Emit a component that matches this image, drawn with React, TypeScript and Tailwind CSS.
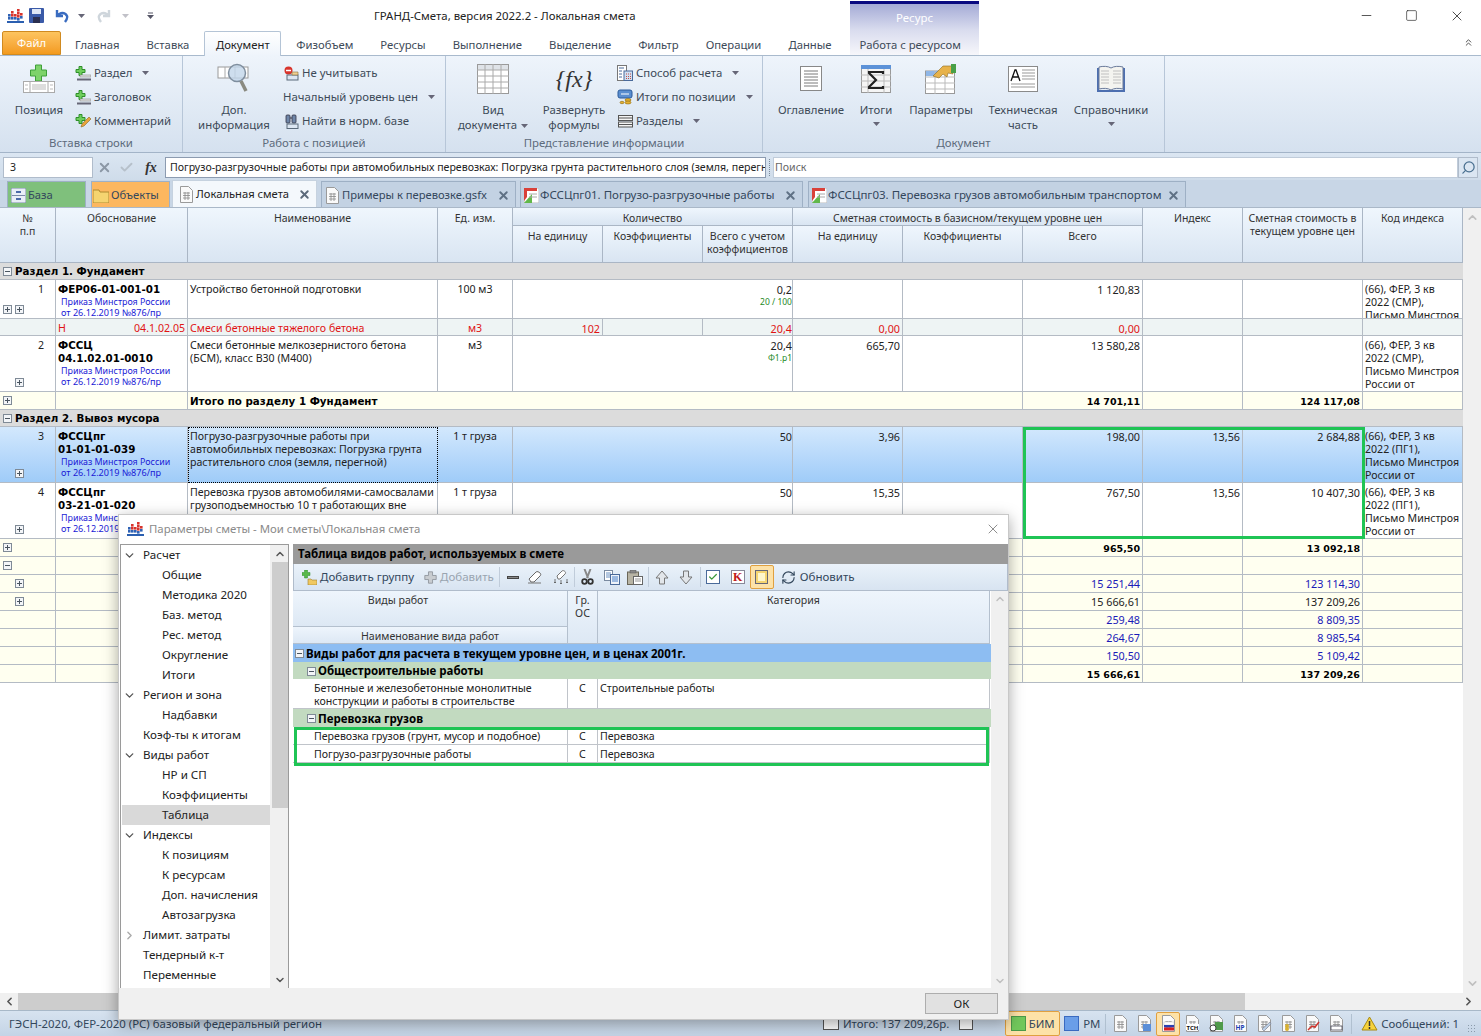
import React from "react";
import { Check, ChevronDown, ChevronLeft, ChevronRight, ChevronUp, ChevronsUp, Minus, RefreshCw, Search, Square, X } from "lucide-react";

const Logo = () => (
  <svg width="17" height="15" viewBox="0 0 17 15" className="shrink-0">
    <rect x="0" y="13" width="17" height="2" fill="#2b5fb0" />
    {[[1,6,"#2f62b5"],[1,9,"#2f62b5"],[4,3,"#d8342c"],[4,6,"#d8342c"],[4,9,"#2f62b5"],[7,6,"#d8342c"],[7,9,"#2f62b5"],[10,1,"#d8342c"],[10,4,"#d8342c"],[10,7,"#d8342c"],[10,10,"#2f62b5"],[13,5,"#d8342c"],[13,8,"#2f62b5"]].map(([x,y,c],i)=>(
      <rect key={i} x={x as number} y={y as number} width="2.6" height="2.6" fill={c as string} />
    ))}
  </svg>
);
const Caret = ({ className = "" }: { className?: string }) => (
  <svg width="7" height="4" viewBox="0 0 7 4" className={className}><path d="M0 0h7L3.500 4z" fill="#667" /></svg>
);
const Plus = ({ s = 16, gray }: { s?: number; gray?: boolean }) => (
  <svg width={s} height={s} viewBox="0 0 16 16" className="shrink-0"><path d="M5.500 1h5v4.500H15v5h-4.500V15h-5v-4.500H1v-5h4.500z" fill={gray ? "#c8ccd0" : "#7ed36a"} stroke={gray ? "#8a9098" : "#2f8f2a"} /></svg>
);
const PlusLine = ({ pen = false }: { pen?: boolean }) => (
  <svg width="16" height="15" viewBox="0 0 16 15">
    <path d="M4 0.500h3v3h3v3H7v3H4v-3H1v-3h3z" fill="#6fce5c" stroke="#2f8f2a" />
    {pen ? <path d="M6 13l1-3 7-7 2 2-7 7z" fill="#e8a33c" stroke="#8a6a20" strokeWidth=".6" /> : <><rect x="5" y="9" width="11" height="2" fill="#e4e4e4" stroke="#777" strokeWidth=".5" /><rect x="2" y="12.500" width="14" height="2" fill="#667" /></>}
  </svg>
);
const BigTable = () => (
  <svg width="32" height="30" viewBox="0 0 32 30">
    <rect x=".5" y=".5" width="31" height="29" fill="#fff" stroke="#9a9a9a" />
    <rect x="1" y="1" width="30" height="5" fill="#dfe3e8" />
    <path d="M0 6h32M0 12h32M0 18h32M0 24h32M8 0v30M16 0v30M24 0v30" stroke="#aaa" fill="none" />
  </svg>
);
const DocSmall = ({ children }: { children?: React.ReactNode }) => (
  <svg width="15" height="17" viewBox="0 0 15 17" className="shrink-0">
    <path d="M1.500.5h8l4 4v12h-12z" fill="#fafafa" stroke="#9a9a9a" />
    <path d="M4 7h7M4 9.500h7M4 12h7M6 6v8M9 6v8" stroke="#888" strokeWidth=".8" fill="none" />
    {children}
  </svg>
);

const RibSmall = ({ icon, label, caret }: { icon?: React.ReactNode; label: string; caret?: boolean }) => (
  <div className="flex h-6 items-center gap-[3px] whitespace-nowrap pt-[2px]">
    {icon && <span className="flex w-4 shrink-0 justify-center">{icon}</span>}
    <span>{label}</span>
    {caret && <Caret className="ml-[7px]" />}
  </div>
);
const RibBig = ({ icon, lines, caret, w, ml }: { icon: React.ReactNode; lines: string[]; caret?: boolean; w: string; ml?: string }) => (
  <div className={`flex shrink-0 flex-col items-center leading-[15px] ${w} ${ml ?? ""}`}>
    <div className="flex h-[37px] items-center justify-center">{icon}</div>
    <div className="h-[5px]" />
    {lines.map((l, i) => <div key={i} className="whitespace-nowrap">{l}{caret && lines.length > 1 && i === 1 ? <Caret className="ml-1 inline" /> : null}</div>)}
    {caret && lines.length === 1 && <Caret className="mt-[5px]" />}
  </div>
);
const Group = ({ w, label, children }: { w: string; label: string; children: React.ReactNode }) => (
  <div className={`flex h-full shrink-0 flex-col border-r border-[#b7c6d8] ${w}`}>
    <div className="flex h-[78px] pt-[4px]">{children}</div>
    <div className="text-center leading-[17px] text-[#5d6b7c]">{label}</div>
  </div>
);
const Box = ({ minus }: { minus?: boolean }) => (
  <span className="relative inline-block h-[9px] w-[9px] shrink-0 border border-[#7f8a96] bg-[#f3f5f8]">
    <span className="absolute left-[1px] top-[3px] h-px w-[5px] bg-[#4a5560]" />
    {!minus && <span className="absolute left-[3px] top-[1px] h-[5px] w-px bg-[#4a5560]" />}
  </span>
);

const bold = "font-['DejaVu_Sans',sans-serif] text-[10.300px] font-bold text-black";
const boldNum = "font-['DejaVu_Sans',sans-serif] text-[9.500px] font-bold text-black pt-[3px]";
const cols = "grid grid-cols-[56px_132px_250px_75px_90px_100px_90px_110px_120px_120px_100px_120px_100px] w-[1463px]";
const line = "border-r border-b border-[#b4bbc4] overflow-hidden px-[2px] leading-[13px]";
const cell = `${line} pt-[3px]`;
const numc = `${cell} text-right text-[10.800px]`;

const HCell = ({ children, className = "" }: { children?: React.ReactNode; className?: string }) => (
  <div className={`border-r border-b border-[#aab6c5] bg-gradient-to-b from-[#eff6fd] to-[#d9e5f2] pt-[4px] text-center text-[10.500px] leading-[13px] text-[#333] ${className}`}>{children}</div>
);
const Code = ({ a, b }: { a: string; b?: string }) => (
  <div className="whitespace-nowrap">
    <div className={bold}>{a}</div>
    {b && <div className={bold}>{b}</div>}
    <div className="pl-[3px] text-[8.900px] leading-[11px] text-[#1a1ad6]">Приказ Минстроя России</div>
    <div className="pl-[3px] text-[9.100px] leading-[11px] text-[#1a1ad6]">от 26.12.2019 №876/пр</div>
  </div>
);
const Num = ({ n, boxes }: { n: string; boxes: number }) => (
  <div className={`${cell} flex flex-col justify-between pb-[4px]`}>
    <div className="pr-[9px] text-right">{n}</div>
    <div className={`flex gap-[3px] pl-[1px] ${boxes === 1 ? "pl-[13px]" : ""}`}>{Array.from({ length: boxes }).map((_, i) => <Box key={i} />)}</div>
  </div>
);
const Sec = ({ t }: { t: string }) => (
  <div className={`flex h-[17px] w-[1463px] items-center gap-[3px] border-b border-[#b4bbc4] bg-[#dcdcdc] pl-[3px] ${bold}`}><Box minus /><span className="pt-px">{t}</span></div>
);
const idx = (a: string) => `(66), ФЕР, 3 кв\n2022 (${a}),\nПисьмо Минстроя\nРоссии от`;

const DataRow = ({ h, bg = "bg-white", n, boxes, code, name, unit, qty, sub, price, tot, index, cur, cod, focus }: any) => (
  <div className={`${cols} ${h} ${bg}`}>
    <Num n={n} boxes={boxes} />
    <div className={cell}>{code}</div>
    <div className={focus ? `${line} whitespace-pre border border-dotted border-black pl-[1px] pt-[2px]` : `${cell} whitespace-pre`}>{name}</div>
    <div className={`${cell} text-center`}>{unit}</div>
    <div className={`${numc} col-span-3 pr-0`}>
      <div>{qty}</div>
      {sub && <div className="text-[8.500px] leading-[11px] text-[#1f8a1f]">{sub}</div>}
    </div>
    <div className={numc}>{price}</div>
    <div className={cell} />
    <div className={numc}>{tot}</div>
    <div className={numc}>{index}</div>
    <div className={numc}>{cur}</div>
    <div className={`${cell} whitespace-pre`}>{cod}</div>
  </div>
);
const TotNum = ({ v, strong }: { v?: string; strong?: boolean }) => (
  <div className={`${line} text-right ${strong ? boldNum : "pt-[2px] text-[10.800px]"}`}>{v}</div>
);
const Total = ({ box, label, a, b, color = "", strong }: any) => (
  <div className={`${cols} h-[18px] bg-[#fffff0] ${color}`}>
    <div className={`${line} flex items-center pl-[3px]`}>{box === 1 && <Box />}{box === 2 && <span className="flex pl-[12px]"><Box /></span>}{box === 3 && <Box minus />}</div>
    <div className={line} />
    <div className={`${cell} col-span-7 ${bold}`}>{label}</div>
    <TotNum v={a} strong={strong} />
    <div className={line} />
    <TotNum v={b} strong={strong} />
    <div className={line} />
  </div>
);
const Tab = ({ icon, label, w, active, bg, close = true, ml = "ml-[4px]", gap = "gap-[3px]", pad = "pl-[3px]", size = "text-[11.200px]" }: any) => (
  <div className={`flex shrink-0 items-center whitespace-nowrap border border-b-0 pt-px ${size} ${gap} ${pad} ${w} ${ml} ${active ? "h-[27px] self-end border-[#c6d2df] bg-[#f4f8fc]" : `h-[26px] self-end border-[#9eb0c5] ${bg ?? "bg-[#c3d2e3]"}`}`}>
    {icon}
    <span className={active ? "text-[#222]" : "text-[#33475c]"}>{label}</span>
    {close && <span className="ml-auto pr-[5px]"><X size={13} strokeWidth={3.5} color={active ? "#5c6a7a" : "#5f7185"} /></span>}
  </div>
);
const FssIcon = () => (
  <svg width="15" height="15" viewBox="0 0 15 15" className="shrink-0"><rect width="15" height="15" fill="#fff" stroke="#bbb" /><path d="M0 15L8 6v9z" fill="#62b84a" /><path d="M0 0h13v3H3v6l-3 4z" fill="#d9413a" /><path d="M5 6h8M5 9h8" stroke="#aaa" /></svg>
);

const treeItems: [string, number, string?][] = [
  ["Расчет", 1, "d"], ["Общие", 2], ["Методика 2020", 2], ["Баз. метод", 2], ["Рес. метод", 2], ["Округление", 2], ["Итоги", 2],
  ["Регион и зона", 1, "d"], ["Надбавки", 2], ["Коэф-ты к итогам", 1], ["Виды работ", 1, "d"], ["НР и СП", 2], ["Коэффициенты", 2], ["Таблица", 2, "s"],
  ["Индексы", 1, "d"], ["К позициям", 2], ["К ресурсам", 2], ["Доп. начисления", 2], ["Автозагрузка", 2], ["Лимит. затраты", 1, "r"], ["Тендерный к-т", 1], ["Переменные", 1],
];
const DHead = ({ children, className = "" }: any) => (
  <div className={`border-r border-b border-[#b4c0ce] bg-gradient-to-b from-[#eef5fc] to-[#dde8f4] pt-[3px] text-center leading-[13px] text-[#333] ${className}`}>{children}</div>
);
const dcols = "grid grid-cols-[275px_30px_392px]";
const dbold = "font-bold text-black text-[11.500px]";
const DRow = ({ h, a, b, c }: any) => (
  <div className={`${dcols} ${h} bg-white`}>
    <div className="whitespace-pre border-r border-b border-[#c0c4ca] pl-[21px] pt-[3px] leading-[13px]">{a}</div>
    <div className="border-r border-b border-[#c0c4ca] pt-[3px] text-center leading-[13px]">{b}</div>
    <div className="border-r border-b border-[#c0c4ca] pl-[2px] pt-[3px] leading-[13px]">{c}</div>
  </div>
);
const StatusDoc = ({ children, active }: any) => (
  <span className={`flex h-[24px] w-[24px] items-center justify-center ${active ? "rounded-[2px] border border-[#e0a040] bg-[#fde2a8]" : ""}`}><DocSmall>{children}</DocSmall></span>
);
const Sep = () => <span className="mx-[5px] h-[20px] border-l border-[#c0ccda]" />;
const BlockArrow = ({ down }: { down?: boolean }) => (
  <svg width="14" height="15" viewBox="0 0 14 15" className={down ? "rotate-180" : ""}><path d="M7 1l6 7H9.500v6h-5V8H1z" fill="#e2e6ea" stroke="#777" /></svg>
);
const RibTab = ({ label, ml = "ml-[27px]" }: { label: string; ml?: string }) => (
  <div className={`flex h-[24px] items-center pt-[4px] ${ml}`}>{label}</div>
);

export default function App() {
  return (
    <div className="relative flex h-[1036px] w-[1481px] flex-col overflow-hidden bg-white font-['Noto_Sans',sans-serif] text-[10.600px] text-[#222]">
      {/* title bar */}
      <div className="flex h-[31px] shrink-0 items-center">
        <span className="ml-[3px] flex w-[25px] justify-center"><Logo /></span>
        <svg width="15" height="15" viewBox="0 0 15 15" className="ml-[1px]"><rect width="15" height="15" rx="1" fill="#3a5aa8" /><rect x="3" y="1" width="9" height="5" fill="#dfe7f5" /><rect x="4" y="9" width="7" height="6" fill="#2a2f50" /></svg>
        <svg width="15" height="14" viewBox="0 0 15 14" className="ml-[10px]"><path d="M3 1v6h6M3.500 7C6 3 11 3 13 7c.8 2-.5 4-2 6" stroke="#3a6cc0" strokeWidth="2.400" fill="none" /></svg>
        <Caret className="ml-[9px]" />
        <svg width="15" height="14" viewBox="0 0 15 14" className="ml-[12px]"><path d="M12 1v6H6M11.500 7C9 3 4 3 2 7c-.8 2 .5 4 2 6" stroke="#cfd6dc" strokeWidth="2.400" fill="none" /></svg>
        <Caret className="ml-[10px] opacity-40" />
        <svg width="7" height="8" viewBox="0 0 7 8" className="ml-[18px]"><path d="M1 1h5" stroke="#556" /><path d="M0 3h7L3.500 7z" fill="#556" /></svg>
        <span className="ml-[220px] text-[11.400px] text-[#222]">ГРАНД-Смета, версия 2022.2 - Локальная смета</span>
        <div className="ml-auto flex items-center gap-[31px] pr-[16px]">
          <Minus size={15} strokeWidth={1.2} />
          <Square size={13} strokeWidth={1.2} />
          <X size={16} strokeWidth={1.2} />
        </div>
      </div>

      {/* context tab */}
      <div className="absolute left-[850px] top-[1px] h-[55px] w-[129px] border-t-[3px] border-[#0a0a80] bg-gradient-to-b from-[#a5abd6] via-[#d9dcee] to-[#f8f8fb]">
        <div className="pt-[5px] text-center text-[11.400px] text-white">Ресурс</div>
      </div>

      {/* ribbon tabs */}
      <div className="relative flex h-[25px] shrink-0 items-end border-b border-[#a9bacd] pl-[2px] text-[11.300px] text-[#3d4a58]">
        <div className="flex h-[24px] w-[59px] items-center justify-center rounded-t-[2px] border border-[#d08a20] bg-gradient-to-b from-[#fdc45e] to-[#f39a1c] pt-[1px] text-white">Файл</div>
        <RibTab label="Главная" ml="ml-[14px]" />
        <RibTab label="Вставка" />
        <div className="relative top-px ml-[15px] flex h-[25px] w-[77px] items-center justify-center rounded-t-[2px] border border-b-0 border-[#b4c4d6] bg-gradient-to-b from-white to-[#eef4fb] pt-[3px] text-[#222]">Документ</div>
        <RibTab label="Физобъем" ml="ml-[15px]" />
        <RibTab label="Ресурсы" />
        <RibTab label="Выполнение" />
        <RibTab label="Выделение" />
        <RibTab label="Фильтр" />
        <RibTab label="Операции" />
        <RibTab label="Данные" />
        <div className="relative ml-[28px] flex h-[24px] items-center pt-[4px]">Работа с ресурсом</div>
        <ChevronsUp size={11} className="absolute right-[7px] top-[6px]" color="#444" />
      </div>

      {/* ribbon */}
      <div className="flex h-[97px] shrink-0 border-b border-[#a3b4c8] bg-gradient-to-b from-[#eef4fb] to-[#d5e1ef] text-[11.400px] text-[#3d4a58]">
        <Group w="w-[183px]" label="Вставка строки">
          <RibBig w="w-[70px]" ml="ml-[4px]" lines={["Позиция"]} icon={<svg width="32" height="29" viewBox="0 0 32 29"><path d="M12.500 1h6v5h5v6h-5v5h-6v-5h-5V6h5z" fill="#7ed36a" stroke="#3f9f3a" /><rect x=".5" y="17.500" width="31" height="11" fill="#fff" stroke="#aaa" /><path d="M7 18v10M25 18v10" stroke="#aaa" /><path d="M2 21h3M2 25h3M9 21h14M9 23h14M9 25h14M27 21h3M27 25h3" stroke="#bbb" /></svg>} />
          <div className="ml-[1px]">
            <RibSmall icon={<PlusLine />} label="Раздел" caret />
            <RibSmall icon={<PlusLine />} label="Заголовок" />
            <RibSmall icon={<PlusLine pen />} label="Комментарий" />
          </div>
        </Group>
        <Group w="w-[263px]" label="Работа с позицией">
          <RibBig w="w-[90px]" ml="ml-[6px]" lines={["Доп.", "информация"]} icon={<svg width="34" height="34" viewBox="0 0 34 34"><rect x="1" y="5" width="30" height="11" fill="#fff" stroke="#999" /><path d="M8 5v11M18 5v11" stroke="#aaa" /><circle cx="20" cy="11" r="8.500" fill="#c2d6ea" fillOpacity=".8" stroke="#7f8e9e" strokeWidth="1.500" /><path d="M24 19l5 10" stroke="#8a8a80" strokeWidth="3.500" /></svg>} />
          <div className="ml-[4px]">
            <RibSmall icon={<svg width="15" height="15" viewBox="0 0 15 15"><circle cx="4.500" cy="4.500" r="4" fill="#d8342c" /><path d="M2 4.500h5" stroke="#fff" strokeWidth="1.500" /><rect x="3" y="9" width="11" height="5" fill="#dce6f2" stroke="#5a6a7a" /><path d="M8 6h6v3H8z" fill="#f0d090" stroke="#8a7040" strokeWidth=".6" /></svg>} label="Не учитывать" />
            <RibSmall label="Начальный уровень цен" caret />
            <RibSmall icon={<svg width="15" height="15" viewBox="0 0 15 15"><rect x="2" y="1" width="4" height="8" rx="1" fill="#6f86a8" stroke="#334" strokeWidth=".8" /><rect x="8" y="1" width="4" height="8" rx="1" fill="#6f86a8" stroke="#334" strokeWidth=".8" /><path d="M6 4h2" stroke="#334" /><rect x="3" y="10" width="11" height="4.500" fill="#dce6f2" stroke="#5a6a7a" /></svg>} label="Найти в норм. базе" />
          </div>
        </Group>
        <Group w="w-[317px]" label="Представление информации">
          <RibBig w="w-[70px]" ml="ml-[12px]" lines={["Вид", "документа"]} caret icon={<BigTable />} />
          <RibBig w="w-[70px]" ml="ml-[11px]" lines={["Развернуть", "формулы"]} icon={<span className="font-['Liberation_Serif',serif] text-[24px] italic leading-none text-[#333]">{"{fx}"}</span>} />
          <div className="ml-[8px]">
            <RibSmall icon={<svg width="16" height="16" viewBox="0 0 16 16"><rect x=".5" y=".5" width="9" height="15" fill="#fff" stroke="#777" /><rect x="7" y="6" width="8.500" height="9.500" fill="#cfdff2" stroke="#4a6a9a" /><path d="M2 3h5M2 6h3M2 9h3M2 12h3" stroke="#4a6a9a" /><path d="M9 9h5M9 11.500h5M9 13.500h5" stroke="#c0504a" strokeDasharray="1 1" /></svg>} label="Способ расчета" caret />
            <RibSmall icon={<svg width="16" height="16" viewBox="0 0 16 16"><rect x="1" y="1" width="14" height="8" rx="2" fill="#5a8ed0" stroke="#2a5a9a" /><path d="M4 5h8" stroke="#fff" /><ellipse cx="11" cy="11" rx="3" ry="1.500" fill="#e6b030" stroke="#8a6a10" strokeWidth=".6" /><ellipse cx="11" cy="13.500" rx="3" ry="1.500" fill="#e6b030" stroke="#8a6a10" strokeWidth=".6" /><ellipse cx="5" cy="13.500" rx="2" ry="1.200" fill="#e6b030" stroke="#8a6a10" strokeWidth=".6" /></svg>} label="Итоги по позиции" caret />
            <RibSmall icon={<svg width="15" height="13" viewBox="0 0 15 13"><rect x=".5" y=".5" width="14" height="5" fill="#f4f4f4" stroke="#555" /><rect x=".5" y="7" width="14" height="5" fill="#f4f4f4" stroke="#555" /><path d="M1 3h13M1 9.500h13" stroke="#555" /></svg>} label="Разделы" caret />
          </div>
        </Group>
        <Group w="w-[402px]" label="Документ">
          <RibBig w="w-[80px]" ml="ml-[8px]" lines={["Оглавление"]} icon={<svg width="22" height="25" viewBox="0 0 22 25"><rect x=".5" y=".5" width="21" height="24" fill="#fff" stroke="#888" /><path d="M4 5h14M4 8h14M4 11h14M4 14h14M4 17h14M4 20h14" stroke="#7a7a7a" /></svg>} />
          <RibBig w="w-[50px]" lines={["Итоги"]} caret icon={<svg width="30" height="28" viewBox="0 0 30 28"><rect x=".5" y=".5" width="29" height="27" fill="#f5f5f5" stroke="#999" /><rect y="0" width="30" height="4" fill="#5c92d8" /><path d="M0 10h30M0 16h30M0 22h30M7 4v24M23 4v24" stroke="#bbb" /><path d="M22 9V7H8v1l7 7-7 7v1h14v-2" fill="none" stroke="#222" strokeWidth="2.200" /></svg>} />
          <RibBig w="w-[80px]" lines={["Параметры"]} icon={<svg width="32" height="30" viewBox="0 0 32 30"><rect x=".5" y="7" width="29" height="22.500" fill="#fff" stroke="#999" /><rect x="1" y="7" width="12" height="5" fill="#8fb6e6" /><path d="M0 13h30M0 19h30M0 25h30M10 7v23M20 7v23" stroke="#bbb" /><path d="M8 12L18 2h9l1 8-5-1-1 4-4-3-4 4z" fill="#e7b24a" stroke="#8a6a20" strokeWidth=".6" /><rect x="26" y="0" width="5" height="9" fill="#48a048" /></svg>} />
          <RibBig w="w-[84px]" lines={["Техническая", "часть"]} icon={<svg width="30" height="26" viewBox="0 0 30 26"><rect x=".5" y=".5" width="29" height="25" fill="#fff" stroke="#8a8a8a" /><path d="M3 15l4-11h1l4 11M5 11h5" fill="none" stroke="#111" strokeWidth="1.300" /><path d="M14 4h13M14 7h13M14 10h13M14 13h13M3 18h24M3 21h24" stroke="#999" /></svg>} />
          <RibBig w="w-[92px]" lines={["Справочники"]} caret icon={<svg width="30" height="28" viewBox="0 0 30 28"><path d="M1 3v24h28V3h-2v22H3V3z" fill="#4d6fb0" /><path d="M3 2c4-1 9-1 12 1 3-2 8-2 12-1v22c-4-1-9-1-12 1-3-2-8-2-12-1z" fill="#f4f4f0" stroke="#6a7a9a" /><path d="M5 6h8M5 9h8M5 12h8M5 15h8M5 18h8M17 6h8M17 9h8M17 12h8M17 15h8M17 18h8" stroke="#c0c0c0" /></svg>} />
        </Group>
        <div className="flex-1" />
      </div>

      {/* formula bar */}
      <div className="flex h-[27px] shrink-0 items-center bg-gradient-to-b from-[#dbe6f2] to-[#cfdcea] px-[3px] pt-[2px]">
        <div className="flex h-[21px] w-[90px] shrink-0 items-center border border-[#b0bccb] bg-white pl-[6px]">3</div>
        <span className="flex w-[22px] shrink-0 justify-center"><X size={15} strokeWidth={3} color="#8c98a6" /></span>
        <span className="flex w-[22px] shrink-0 justify-center"><Check size={15} strokeWidth={3} color="#b6c0ca" /></span>
        <span className="flex w-[28px] shrink-0 justify-center font-['Liberation_Serif',serif] text-[14px] font-bold italic leading-none text-[#333]">fx</span>
        <div className="h-[21px] w-[601px] shrink-0 overflow-hidden whitespace-nowrap border border-[#8c9bb0] bg-white pl-[4px] leading-[19px]">Погрузо-разгрузочные работы при автомобильных перевозках: Погрузка грунта растительного слоя (земля, перегной)</div>
        <span className="mx-[3px] h-[17px] border-l border-dotted border-[#7a8a9c]" />
        <div className="flex h-[21px] w-[685px] shrink-0 items-center border border-[#c0ccda] bg-white pl-[1px] text-[#666]">Поиск</div>
        <div className="flex h-[21px] w-[20px] shrink-0 items-center justify-center border border-[#b0bccb] bg-[#dbe6f2]"><Search size={15} className="-scale-x-100" color="#4a7090" /></div>
      </div>

      {/* doc tabs */}
      <div className="flex h-[28px] shrink-0 items-end border-b border-[#aab8c8] bg-[#c8d6e6] pl-[3px]">
        <Tab w="w-[79px]" bg="bg-[#7fc07c]" close={false} label="База" gap="gap-[2px]" icon={<svg width="15" height="15" viewBox="0 0 15 15" className="shrink-0"><rect width="15" height="15" rx="1" fill="#e8eef6" stroke="#7a8aa8" /><rect x="1" y="7" width="13" height="1" fill="#7a8aa8" /><rect x="5" y="3" width="5" height="2" fill="#4a6aa8" /><rect x="5" y="10" width="5" height="2" fill="#4a6aa8" /></svg>} />
        <Tab w="w-[79px]" ml="ml-[5px]" bg="bg-[#fcb75f]" close={false} label="Объекты" pad="pl-[1px]" gap="gap-[2px]" icon={<svg width="16" height="15" viewBox="0 0 16 15" className="shrink-0"><path d="M0 2h6l1 2h9v11H0z" fill="#f5d470" stroke="#b08a30" /></svg>} />
        <Tab active w="w-[145px]" ml="ml-[2px]" pad="pl-[6px]" gap="gap-[2px]" label="Локальная смета" icon={<DocSmall />} />
        <Tab w="w-[195px]" gap="gap-[2px]" label="Примеры к перевозке.gsfx" icon={<DocSmall />} />
        <Tab w="w-[283px]" gap="gap-[1px]" size="text-[11.500px]" label="ФССЦпг01. Погрузо-разгрузочные работы" icon={<FssIcon />} />
        <Tab w="w-[378px]" ml="ml-[5px]" gap="gap-[1px]" size="text-[11.500px]" label="ФССЦпг03. Перевозка грузов автомобильным транспортом" icon={<FssIcon />} />
      </div>

      {/* grid area */}
      <div className="flex min-h-0 flex-1">
        <div className="w-[1463px] shrink-0">
          <div className={`${cols} h-[55px] grid-rows-[18px_37px]`}>
            <HCell className="row-span-2">№<br />п.п</HCell>
            <HCell className="row-span-2">Обоснование</HCell>
            <HCell className="row-span-2">Наименование</HCell>
            <HCell className="row-span-2">Ед. изм.</HCell>
            <HCell className="col-span-3">Количество</HCell>
            <HCell className="col-span-3">Сметная стоимость в базисном/текущем уровне цен</HCell>
            <HCell className="row-span-2">Индекс</HCell>
            <HCell className="row-span-2">Сметная стоимость в текущем уровне цен</HCell>
            <HCell className="row-span-2">Код индекса</HCell>
            <HCell>На единицу</HCell>
            <HCell>Коэффициенты</HCell>
            <HCell>Всего с учетом коэффициентов</HCell>
            <HCell>На единицу</HCell>
            <HCell>Коэффициенты</HCell>
            <HCell>Всего</HCell>
          </div>
          <Sec t="Раздел 1. Фундамент" />
          <DataRow h="h-[39px]" n="1" boxes={2} code={<Code a="ФЕР06-01-001-01" />} name="Устройство бетонной подготовки" unit="100 м3" qty="0,2" sub="20 / 100" tot="1 120,83" cod={idx("СМР")} />
          <div className={`${cols} h-[17px] bg-[#eef4f4] text-[#e01414]`}>
            <div className={cell} />
            <div className={`${cell} flex justify-between`}><span>Н</span><span>04.1.02.05</span></div>
            <div className={cell}>Смеси бетонные тяжелого бетона</div>
            <div className={`${cell} text-center`}>м3</div>
            <div className={numc}>102</div>
            <div className={cell} />
            <div className={`${numc} pr-0`}>20,4</div>
            <div className={numc}>0,00</div>
            <div className={cell} />
            <div className={numc}>0,00</div>
            <div className={cell} /><div className={cell} /><div className={cell} />
          </div>
          <DataRow h="h-[56px]" n="2" boxes={1} code={<Code a="ФССЦ" b="04.1.02.01-0010" />} name={"Смеси бетонные мелкозернистого бетона\n(БСМ), класс В30 (М400)"} unit="м3" qty="20,4" sub="Ф1.р1" price="665,70" tot="13 580,28" cod={idx("СМР")} />
          <Total box={1} label="Итого по разделу 1 Фундамент" a="14 701,11" b="124 117,08" strong />
          <Sec t="Раздел 2. Вывоз мусора" />
          <DataRow h="h-[56px]" bg="bg-gradient-to-b from-[#d3e8fd] to-[#9ecbf8]" n="3" boxes={1} focus code={<Code a="ФССЦпг" b="01-01-01-039" />} name={"Погрузо-разгрузочные работы при\nавтомобильных перевозках: Погрузка грунта\nрастительного слоя (земля, перегной)"} unit="1 т груза" qty="50" price="3,96" tot="198,00" index="13,56" cur="2 684,88" cod={idx("ПГ1")} />
          <DataRow h="h-[56px]" n="4" boxes={1} code={<Code a="ФССЦпг" b="03-21-01-020" />} name={"Перевозка грузов автомобилями-самосвалами\nгрузоподъемностью 10 т работающих вне"} unit="1 т груза" qty="50" price="15,35" tot="767,50" index="13,56" cur="10 407,30" cod={idx("ПГ1")} />
          <Total box={1} a="965,50" b="13 092,18" strong />
          <Total box={3} />
          <Total box={2} a="15 251,44" b="123 114,30" color="text-[#1a1ab8]" />
          <Total box={2} a="15 666,61" b="137 209,26" />
          <Total a="259,48" b="8 809,35" color="text-[#1a1ab8]" />
          <Total a="264,67" b="8 985,54" color="text-[#1a1ab8]" />
          <Total a="150,50" b="5 109,42" color="text-[#1a1ab8]" />
          <Total a="15 666,61" b="137 209,26" strong />
        </div>
        <div className="flex flex-1 flex-col items-center justify-between bg-[#f0f0f0] py-[3px]">
          <ChevronUp size={13} color="#c0c0c0" strokeWidth={3} />
          <ChevronDown size={13} color="#c0c0c0" strokeWidth={3} />
        </div>
      </div>

      {/* h scroll */}
      <div className="flex h-[17px] shrink-0 items-center bg-[#f0f0f0]">
        <span className="flex w-[18px] justify-center"><ChevronLeft size={13} strokeWidth={3} color="#555" /></span>
        <div className="h-[17px] w-[1227px] bg-[#cdcdcd]" />
        <span className="ml-auto mr-[4px] flex w-[18px] justify-center"><ChevronRight size={13} strokeWidth={3} color="#555" /></span>
      </div>

      {/* status bar */}
      <div className="flex h-[26px] shrink-0 items-center border-t border-[#a8b8c8] bg-gradient-to-b from-[#d7e3f0] to-[#c4d4e6] pl-[9px] text-[11.400px] text-[#33475c]">
        <span className="w-[300px] shrink-0 whitespace-nowrap">ГЭСН-2020, ФЕР-2020 (РС) базовый федеральный регион</span>
        <span className="ml-[514px] flex shrink-0 items-center gap-[4px] whitespace-nowrap"><span className="h-[13px] w-[16px] border border-[#555] bg-white" />Итого: 137 209,26р.<span className="ml-[6px] h-[13px] w-[14px] border border-[#555] bg-white" /></span>
        <div className="ml-auto flex items-center">
          <div className="flex h-[25px] w-[55px] items-center justify-center gap-[3px] rounded-[2px] border border-[#e0a040] bg-[#fde2a8]"><span className="h-[15px] w-[15px] border border-[#4a9a4a] bg-[#72c85c]" />БИМ</div>
          <div className="ml-[4px] flex w-[38px] items-center gap-[4px]"><span className="h-[15px] w-[15px] border border-[#3a6ac0] bg-[#6a9ee8]" />РМ</div>
          <span className="ml-[3px] mr-[2px] h-[20px] border-l border-[#b0c0d0]" />
          <div className="flex items-center">
            <StatusDoc />
            <StatusDoc><rect x="6" y="9" width="8" height="7" fill="#5a8ed8" /></StatusDoc>
            <StatusDoc active><rect x="3" y="7" width="10" height="3" fill="#fff" stroke="#999" strokeWidth=".3" /><rect x="3" y="10" width="10" height="2.500" fill="#2a3fb0" /><rect x="3" y="12.500" width="10" height="3" fill="#d82020" /></StatusDoc>
            <StatusDoc><rect x="1" y="9" width="13" height="6" fill="#fff" /><text x="7.500" y="15" fontSize="6" fontWeight="700" textAnchor="middle" fill="#111">ТСН</text></StatusDoc>
            <StatusDoc><rect x="6" y="7" width="8" height="8" fill="#4f9a4a" /><circle cx="4" cy="13" r="3" fill="#fff" stroke="#444" /></StatusDoc>
            <StatusDoc><rect x="2" y="9" width="10" height="6" fill="#fff" /><text x="7" y="15" fontSize="6.500" fontWeight="700" textAnchor="middle" fill="#1a40b0">НР</text></StatusDoc>
            <StatusDoc><path d="M5 14l8-7 1 2-7 7z" fill="#bcd0e6" stroke="#667" strokeWidth=".5" /></StatusDoc>
            <StatusDoc><circle cx="6" cy="11" r="2" fill="#d8b030" /><circle cx="6" cy="14" r="2" fill="#d8b030" /></StatusDoc>
            <StatusDoc><path d="M3 15l4-4 3 1 4-5" stroke="#d0342c" strokeWidth="1.500" fill="none" /></StatusDoc>
            <StatusDoc><rect x="2" y="11" width="11" height="4" fill="#fff" stroke="#334" strokeWidth=".7" /></StatusDoc>
          </div>
          <span className="ml-[3px] mr-[9px] h-[20px] border-l border-[#b0c0d0]" />
          <svg width="17" height="15" viewBox="0 0 17 15"><path d="M8.500 1L16 14H1z" fill="#f6d23c" stroke="#a88a10" /><path d="M8.500 5v5M8.500 11v2" stroke="#333" strokeWidth="1.500" /></svg>
          <span className="ml-[3px]">Сообщений: 1</span>
          <span className="ml-[8px] mr-[6px] mt-[8px] h-[8px] w-[8px] bg-[radial-gradient(#8a9aaa_1px,transparent_1px)] bg-[length:3px_3px]" />
        </div>
      </div>

      {/* green highlight on grid */}
      <div className="pointer-events-none absolute left-[1023px] top-[427px] h-[112px] w-[342px] border-[3px] border-[#1fc455]" />

      {/* dialog */}
      <div className="absolute left-[118px] top-[514px] flex h-[506px] w-[891px] flex-col border border-[#c8c8c8] bg-white shadow-[0_4px_14px_rgba(0,0,0,0.35)]">
        <div className="flex h-[29px] shrink-0 items-center pb-[2px] pl-[8px] text-[11.400px] text-[#8a8a8a]">
          <Logo />
          <span className="ml-[5px]">Параметры сметы - Мои сметы\Локальная смета</span>
          <X size={16} strokeWidth={1} className="ml-auto mr-[7px]" color="#555" />
        </div>
        <div className="flex min-h-0 flex-1 pl-px">
          <div className="flex h-[445px] w-[169px] shrink-0 border border-[#9a9a9a] pl-[1px] text-[11.600px] text-[#222]">
            <div className="w-[148px] shrink-0">
              {treeItems.map(([t, lvl, k]) => (
                <div key={t} className={`relative flex h-[20px] items-center ${k === "s" ? "bg-[#d9d9d9]" : ""} ${lvl === 2 ? "pl-[40px]" : "pl-[21px]"}`}>
                  {k === "d" && <ChevronDown size={13} strokeWidth={2.5} color="#555" className="absolute left-[1px]" />}
                  {k === "r" && <ChevronRight size={13} strokeWidth={2.5} color="#aaa" className="absolute left-[1px]" />}
                  {t}
                </div>
              ))}
            </div>
            <div className="flex flex-1 flex-col bg-[#f0f0f0] pl-[2px]">
              <div className="flex h-[17px] items-center justify-center"><ChevronUp size={12} strokeWidth={3} color="#555" /></div>
              <div className="h-[246px] bg-[#cdcdcd]" />
              <div className="mt-auto flex h-[17px] items-center justify-center"><ChevronDown size={12} strokeWidth={3} color="#555" /></div>
            </div>
          </div>
          <div className="ml-[4px] flex h-[445px] w-[715px] shrink-0 flex-col">
            <div className={`flex h-[20px] shrink-0 items-center bg-[#9a9a9a] pl-[5px] ${dbold}`}>Таблица видов работ, используемых в смете</div>
            <div className="flex h-[27px] shrink-0 items-center border border-t-0 border-[#b0bccb] bg-gradient-to-b from-[#eaf2fa] to-[#d8e4f1] pl-[8px] text-[11.500px] text-[#33475c]">
              <svg width="15" height="15" viewBox="0 0 15 15"><path d="M2.500 0h3v2.500H8v3H5.500V8h-3V5.500H0v-3h2.500z" fill="#58b84a" stroke="#2f8f2a" strokeWidth=".5" /><path d="M6 9h3l1 1h5v5H6z" fill="#f0c860" stroke="#a08030" strokeWidth=".6" /></svg>
              <span className="ml-[3px]">Добавить группу</span>
              <span className="ml-[10px] flex items-center gap-[3px] text-[#9aa5b0]"><Plus s={13} gray /><span>Добавить</span></span>
              <Sep />
              <span className="flex w-[16px] justify-center"><span className="h-[3px] w-[12px] border border-[#444] bg-[#888]" /></span>
              <span className="ml-[6px] flex w-[16px] justify-center"><svg width="16" height="14" viewBox="0 0 16 14"><path d="M2 9l7-7c1-1 3 0 4 1s1 2 0 3L7 12H4z" fill="#fff" stroke="#666" /><path d="M1 13h13" stroke="#777" /></svg></span>
              <span className="ml-[10px] flex w-[16px] justify-center"><svg width="16" height="16" viewBox="0 0 16 16"><path d="M4 7l5-5c1-1 2.500 0 3 .5s1 1.500 0 2.500L7 10H5z" fill="#fff" stroke="#777" /><path d="M2 10v4M1 13l1 1 1-1M8 11v4M7 14l1 1 1-1M14 10v4M13 13l1 1 1-1" stroke="#555" strokeWidth=".8" fill="none" /></svg></span>
              <Sep />
              <span className="flex w-[16px] justify-center"><svg width="13" height="16" viewBox="0 0 13 16"><path d="M3.500 0l3.500 9M9.500 0L6 9" stroke="#888" strokeWidth="2" /><circle cx="3.500" cy="12.500" r="2.300" fill="none" stroke="#333" strokeWidth="1.800" /><circle cx="9.500" cy="12.500" r="2.300" fill="none" stroke="#333" strokeWidth="1.800" /></svg></span>
              <span className="ml-[8px] flex w-[16px] justify-center"><svg width="16" height="15" viewBox="0 0 16 15"><rect x=".5" y=".5" width="8" height="10" fill="#fff" stroke="#7a8aa0" /><path d="M2 3h5M2 5h5M2 7h5" stroke="#6a90c0" /><rect x="6.500" y="4.500" width="9" height="10" fill="#eef3fa" stroke="#4a6a9a" /><path d="M8 7h6M8 9h6M8 11h6" stroke="#4a80c8" /></svg></span>
              <span className="ml-[7px] flex w-[16px] justify-center"><svg width="16" height="15" viewBox="0 0 16 15"><rect x=".5" y="2" width="11" height="12.500" fill="#b8b4a4" stroke="#6a6658" /><rect x="3" y="0" width="6" height="3" fill="#888" stroke="#555" strokeWidth=".5" /><rect x="6.500" y="6.500" width="9" height="8" fill="#fff" stroke="#666" /><path d="M8 9h6M8 11h6" stroke="#999" /></svg></span>
              <Sep />
              <span className="flex w-[16px] justify-center"><BlockArrow /></span>
              <span className="ml-[8px] flex w-[16px] justify-center"><BlockArrow down /></span>
              <span className="ml-[6px] mr-[5px] h-[20px] border-l border-[#c0ccda]" />
              <span className="flex h-[14px] w-[14px] items-center justify-center border border-[#4a6a9a] bg-white"><Check size={10} strokeWidth={3} color="#3a9a3a" /></span>
              <span className="ml-[11px] flex h-[14px] w-[14px] items-center justify-center border border-[#889] bg-white font-['Liberation_Serif',serif] text-[12px] font-bold leading-none text-[#c01818]">K</span>
              <span className="ml-[5px] flex h-[24px] w-[24px] items-center justify-center rounded-[2px] border border-[#e0a040] bg-[#fde2a8]"><svg width="13" height="14" viewBox="0 0 13 14"><rect x=".5" y=".5" width="12" height="13" fill="#f5d470" stroke="#667" /><rect x="3" y="3" width="7" height="8" fill="#fff6cc" /></svg></span>
              <span className="ml-[7px]"><RefreshCw size={15} strokeWidth={1.8} color="#33475c" /></span>
              <span className="ml-[4px]">Обновить</span>
            </div>
            <div className="relative flex min-h-0 flex-1">
              <div className="w-[698px] shrink-0">
                <div className={`${dcols} h-[53px] grid-rows-[36px_17px]`}>
                  <DHead className="pr-[64px]">Виды работ</DHead>
                  <DHead className="row-span-2">Гр.<br />ОС</DHead>
                  <DHead className="row-span-2">Категория</DHead>
                  <DHead>Наименование вида работ</DHead>
                </div>
                <div className={`flex h-[18px] items-center gap-[2px] bg-[#8dbdf2] pl-[2px] pt-px ${dbold}`}><Box minus />Виды работ для расчета в текущем уровне цен, и в ценах 2001г.</div>
                <div className={`flex h-[17px] items-center gap-[2px] bg-[#c2dac0] pl-[14px] pt-px ${dbold}`}><Box minus />Общестроительные работы</div>
                <DRow h="h-[30px]" a={"Бетонные и железобетонные монолитные\nконструкции и работы в строительстве"} b="С" c="Строительные работы" />
                <div className={`flex h-[18px] items-center gap-[2px] bg-[#c2dac0] pl-[14px] pt-px ${dbold}`}><Box minus />Перевозка грузов</div>
                <DRow h="h-[18px]" a="Перевозка грузов (грунт, мусор и подобное)" b="С" c="Перевозка" />
                <DRow h="h-[18px]" a="Погрузо-разгрузочные работы" b="С" c="Перевозка" />
              </div>
              <div className="flex flex-1 flex-col items-center justify-between bg-[#f0f0f0] py-[2px]">
                <ChevronUp size={12} strokeWidth={3} color="#c0c0c0" />
                <ChevronDown size={12} strokeWidth={3} color="#c0c0c0" />
              </div>
              <div className="pointer-events-none absolute left-[1px] top-[136px] h-[39px] w-[695px] border-[3px] border-[#1fc455]" />
            </div>
          </div>
        </div>
        <div className="flex h-[31px] shrink-0 items-center justify-end bg-[#f0f0f0] pr-[10px] text-[11.400px]">
          <div className="flex h-[21px] w-[73px] items-center justify-center border border-[#adadad] bg-[#e1e1e1] text-[#222]">ОК</div>
        </div>
      </div>
    </div>
  );
}
